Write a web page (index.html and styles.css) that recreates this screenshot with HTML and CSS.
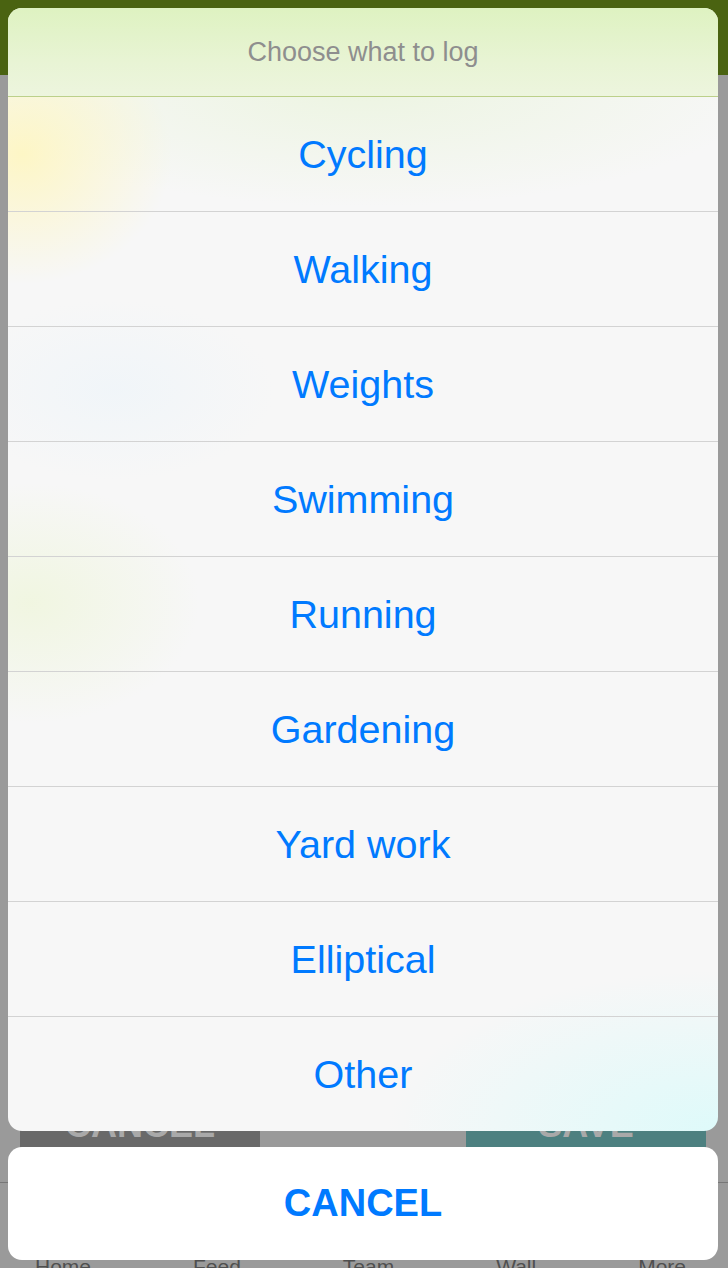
FILE: index.html
```html
<!DOCTYPE html>
<html lang="en">
<head>
<meta charset="utf-8">
<title>Choose what to log</title>
<link rel="stylesheet" href="styles.css">
</head>
<body>
<div class="app">
  <header class="topbar"></header>
  <main class="content">
    <div class="actions">
      <div class="btn btn-cancel">CANCEL</div>
      <div class="btn btn-save">SAVE</div>
    </div>
  </main>
  <nav class="tabbar">
    <span class="tab">Home</span>
    <span class="tab">Feed</span>
    <span class="tab">Team</span>
    <span class="tab">Wall</span>
    <span class="tab">More</span>
  </nav>
</div>

<div class="overlay">
  <div class="sheet">
    <div class="sheet-title">Choose what to log</div>
    <div class="sheet-row">Cycling</div>
    <div class="sheet-row">Walking</div>
    <div class="sheet-row">Weights</div>
    <div class="sheet-row">Swimming</div>
    <div class="sheet-row">Running</div>
    <div class="sheet-row">Gardening</div>
    <div class="sheet-row">Yard work</div>
    <div class="sheet-row">Elliptical</div>
    <div class="sheet-row">Other</div>
  </div>
  <div class="sheet-cancel">CANCEL</div>
</div>
</body>
</html>
```

FILE: styles.css
```css
html, body {
  margin: 0;
  padding: 0;
}
body {
  width: 728px;
  height: 1268px;
  overflow: hidden;
  background: #9a9a9a;
  font-family: "Liberation Sans", Arial, sans-serif;
  position: relative;
}

/* dimmed app behind the sheet */
.app {
  display: flex;
  flex-direction: column;
  height: 1268px;
}
.topbar {
  height: 75px;
  background: #4a6311;
  flex: none;
}
.content {
  height: 1107px;
  flex: none;
  display: flex;
  flex-direction: column;
  justify-content: flex-end;
  padding: 0 22px 35px 20px;
  box-sizing: border-box;
}
.actions {
  display: flex;
  justify-content: space-between;
}
.btn {
  width: 240px;
  height: 64px;
  display: flex;
  align-items: flex-end;
  justify-content: center;
  font-weight: bold;
  font-size: 36px;
  line-height: 1;
  color: #a9a9a9;
  padding-bottom: 4px;
  box-sizing: border-box;
}
.btn-cancel { background: #696969; }
.btn-save { background: #4d8080; }

.tabbar {
  flex: none;
  height: 86px;
  border-top: 1px solid #777;
  display: flex;
  justify-content: space-between;
  align-items: flex-start;
  padding: 73px 42px 0 35px;
  box-sizing: border-box;
}
.tab {
  font-size: 21px;
  color: #4f4f4f;
  line-height: 1;
}

/* action sheet */
.overlay {
  position: absolute;
  inset: 0;
  display: flex;
  flex-direction: column;
  gap: 16px;
  padding: 8px 10px 8px 8px;
  box-sizing: border-box;
}
.sheet {
  height: 1123px;
  flex: none;
  border-radius: 14px;
  overflow: hidden;
  background:
    radial-gradient(ellipse 150px 130px at 2% 13%, rgba(255, 246, 185, 0.8), rgba(255, 246, 185, 0) 100%),
    radial-gradient(ellipse 170px 120px at 3% 53%, rgba(236, 245, 210, 0.6), rgba(236, 245, 210, 0) 100%),
    radial-gradient(ellipse 160px 90px at 15% 34%, rgba(236, 244, 250, 0.6), rgba(236, 244, 250, 0) 100%),
    radial-gradient(ellipse 330px 160px at 100% 100%, rgba(222, 250, 250, 1), rgba(222, 250, 250, 0) 100%),
    radial-gradient(ellipse 400px 120px at 50% 7%, rgba(234, 244, 220, 0.8), rgba(234, 244, 220, 0) 100%),
    #f7f7f7;
  display: flex;
  flex-direction: column;
}
.sheet-title {
  height: 88px;
  flex: none;
  display: flex;
  align-items: center;
  justify-content: center;
  font-size: 27px;
  color: #8e8e8e;
  background: linear-gradient(180deg, #def2c1 0%, #e8f4d4 60%, #edf5de 100%);
}
.sheet-row {
  height: 115px;
  flex: none;
  box-sizing: border-box;
  border-top: 1px solid #d3d3d3;
  display: flex;
  align-items: center;
  justify-content: center;
  font-size: 39.5px;
  color: #007aff;
}
.sheet-title + .sheet-row {
  border-top-color: #bcd08a;
}
.sheet-cancel {
  height: 113px;
  flex: none;
  border-radius: 14px;
  background: #ffffff;
  display: flex;
  align-items: center;
  justify-content: center;
  font-size: 38px;
  font-weight: bold;
  color: #007aff;
}
```
